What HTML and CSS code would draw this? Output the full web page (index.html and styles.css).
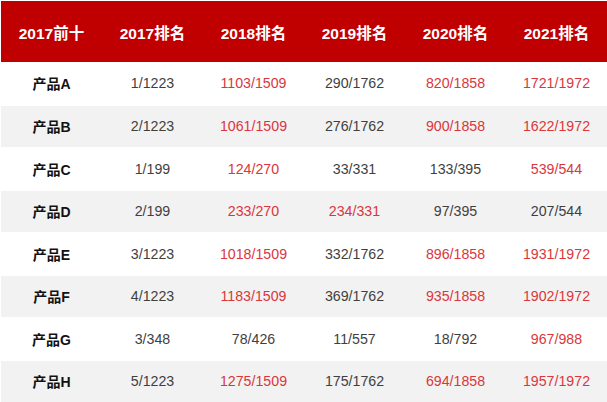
FILE: index.html
```html
<!DOCTYPE html>
<html lang="zh">
<head>
<meta charset="utf-8">
<link rel="stylesheet" href="styles.css">
</head>
<body>
<div class="page">
  <table class="rank">
    <thead>
      <tr><th>2017前十</th><th>2017排名</th><th>2018排名</th><th>2019排名</th><th>2020排名</th><th>2021排名</th></tr>
    </thead>
    <tbody>
      <tr><td class="name">产品A</td><td>1/1223</td><td class="up">1103/1509</td><td>290/1762</td><td class="up">820/1858</td><td class="up">1721/1972</td></tr>
      <tr><td class="name">产品B</td><td>2/1223</td><td class="up">1061/1509</td><td>276/1762</td><td class="up">900/1858</td><td class="up">1622/1972</td></tr>
      <tr><td class="name">产品C</td><td>1/199</td><td class="up">124/270</td><td>33/331</td><td>133/395</td><td class="up">539/544</td></tr>
      <tr><td class="name">产品D</td><td>2/199</td><td class="up">233/270</td><td class="up">234/331</td><td>97/395</td><td>207/544</td></tr>
      <tr><td class="name">产品E</td><td>3/1223</td><td class="up">1018/1509</td><td>332/1762</td><td class="up">896/1858</td><td class="up">1931/1972</td></tr>
      <tr><td class="name">产品F</td><td>4/1223</td><td class="up">1183/1509</td><td>369/1762</td><td class="up">935/1858</td><td class="up">1902/1972</td></tr>
      <tr><td class="name">产品G</td><td>3/348</td><td>78/426</td><td>11/557</td><td>18/792</td><td class="up">967/988</td></tr>
      <tr><td class="name">产品H</td><td>5/1223</td><td class="up">1275/1509</td><td>175/1762</td><td class="up">694/1858</td><td class="up">1957/1972</td></tr>
    </tbody>
  </table>
</div>
</body>
</html>
```

FILE: styles.css
```css
html, body {
  margin: 0;
  padding: 0;
  background: #ffffff;
}
body {
  font-family: "Liberation Sans", Arial, "Noto Sans CJK SC", sans-serif;
  width: 607px;
  height: 402px;
  overflow: hidden;
}
.page {
  padding: 1px 0 0 1px;
}
.rank {
  width: 606px;
  border-collapse: collapse;
  table-layout: fixed;
}
.rank th {
  background: #c00000;
  color: #ffffff;
  font-weight: bold;
  font-size: 15.5px;
  height: 61px;
  padding: 0;
  text-align: center;
  vertical-align: middle;
}
.rank td {
  height: 41.5px;
  padding: 0;
  text-align: center;
  vertical-align: middle;
  font-size: 14.2px;
  color: #3f3f3f;
  border-top: 1px solid #ffffff;
}
.rank tbody tr:nth-child(even) td {
  background: #f2f2f2;
}
.rank tbody tr:first-child td {
  border-top: 0;
  height: 42.5px;
}
.rank td.name {
  font-weight: bold;
  color: #111111;
  font-size: 14px;
}
.rank td.up {
  color: #d9373c;
}
```
